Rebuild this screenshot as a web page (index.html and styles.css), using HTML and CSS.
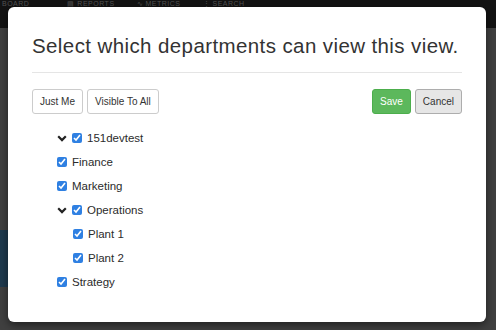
FILE: index.html
```html
<!DOCTYPE html>
<html lang="en">
<head>
    <meta charset="UTF-8">
    <title>Departments</title>
    <link rel="stylesheet" href="styles.css">
</head>
<body>
    <div class="page">
        <div class="topnav">
            <span class="nav-item nav-first">Board</span>
            <span class="nav-item">&#9636; Reports</span>
            <span class="nav-item">&#8767; Metrics</span>
            <span class="nav-item">&#8942; Search</span>
        </div>
        <div class="content">
            <div class="side-item active"></div>
        </div>
    </div>

    <div class="modal">
        <h1 class="modal-title">Select which departments can view this view.</h1>
        <div class="toolbar">
            <div class="btn-group">
                <button class="btn">Just Me</button>
                <button class="btn">Visible To All</button>
            </div>
            <div class="btn-group">
                <button class="btn btn-save">Save</button>
                <button class="btn btn-cancel">Cancel</button>
            </div>
        </div>

        <ul class="tree">
            <li>
                <label class="node">
                    <svg class="chevron" width="10" height="7" viewBox="0 0 10 7"><path d="M1.2 1.3 L5 5.1 L8.8 1.3" fill="none" stroke="#222" stroke-width="2.2"/></svg>
                    <input type="checkbox" checked>
                    <span>151devtest</span>
                </label>
            </li>
            <li><label class="node"><input type="checkbox" checked><span>Finance</span></label></li>
            <li><label class="node"><input type="checkbox" checked><span>Marketing</span></label></li>
            <li>
                <label class="node">
                    <svg class="chevron" width="10" height="7" viewBox="0 0 10 7"><path d="M1.2 1.3 L5 5.1 L8.8 1.3" fill="none" stroke="#222" stroke-width="2.2"/></svg>
                    <input type="checkbox" checked>
                    <span>Operations</span>
                </label>
                <ul class="tree children">
                    <li><label class="node"><input type="checkbox" checked><span>Plant 1</span></label></li>
                    <li><label class="node"><input type="checkbox" checked><span>Plant 2</span></label></li>
                </ul>
            </li>
            <li><label class="node"><input type="checkbox" checked><span>Strategy</span></label></li>
        </ul>
    </div>
</body>
</html>
```

FILE: styles.css
```css
body {
    margin: 0;
    font-family: "Liberation Sans", Arial, sans-serif;
    background-color: #404040;
    overflow: hidden;
    height: 330px;
}

/* dimmed page behind the modal */
.page {
    height: 330px;
}

.topnav {
    height: 28px;
    background-color: #131313;
    display: flex;
    gap: 22px;
    padding-left: 2px;
}

.nav-item {
    color: #525252;
    font-size: 7px;
    line-height: 7px;
    text-transform: uppercase;
    letter-spacing: 0.5px;
}

.nav-first {
    margin-right: 16px;
}

.content {
    padding-top: 202px;
}

.side-item.active {
    width: 40px;
    height: 57px;
    background-color: #1f3a4e;
}

/* modal */
.modal {
    position: absolute;
    left: 8px;
    top: 7px;
    width: 478px;
    height: 315px;
    box-sizing: border-box;
    padding: 27px 24px 0;
    background-color: #fff;
    border-radius: 6px;
    box-shadow: 0 3px 9px rgba(0, 0, 0, 0.5);
}

.modal-title {
    margin: 0;
    font-size: 20.5px;
    line-height: 23px;
    letter-spacing: 0.4px;
    font-weight: normal;
    color: #333;
    padding-bottom: 15px;
    border-bottom: 1px solid #e5e5e5;
}

.toolbar {
    display: flex;
    justify-content: space-between;
    margin-top: 16px;
}

.btn-group {
    display: flex;
    gap: 4px;
}

.btn {
    font-family: "Liberation Sans", Arial, sans-serif;
    font-size: 10px;
    height: 25px;
    padding: 0 7px;
    color: #333;
    background-color: #fff;
    border: 1px solid #ccc;
    border-radius: 3px;
}

.btn-save {
    background-color: #5cb85c;
    border-color: #4cae4c;
    color: #fff;
}

.btn-cancel {
    background-color: #e6e6e6;
    border-color: #adadad;
}

.tree {
    list-style: none;
    margin: 12px 0 0;
    padding: 0 0 0 25px;
}

.tree.children {
    margin: 0;
    padding-left: 16px;
}

.node {
    display: flex;
    align-items: center;
    height: 24px;
    font-size: 11.5px;
    color: #2b2b2b;
}

.chevron {
    margin-right: 5px;
}

.node input {
    width: 10px;
    height: 10px;
    margin: 0 5px 0 0;
    accent-color: #2f80e2;
}
```
